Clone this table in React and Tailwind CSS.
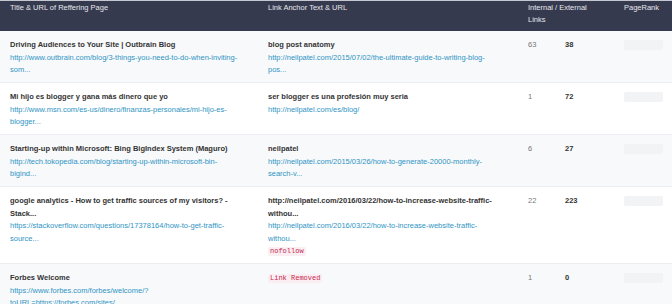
import React from "react";

const rows = [
  {
    title: ["Driving Audiences to Your Site | Outbrain Blog"],
    url: ["http://www.outbrain.com/blog/3-things-you-need-to-do-when-inviting-", "som..."],
    anchor: ["blog post anatomy"],
    anchorUrl: ["http://neilpatel.com/2015/07/02/the-ultimate-guide-to-writing-blog-", "pos..."],
    internal: "63",
    external: "38",
    bg: "bg-[#f8f9fb]",
  },
  {
    title: ["Mi hijo es blogger y gana más dinero que yo"],
    url: ["http://www.msn.com/es-us/dinero/finanzas-personales/mi-hijo-es-", "blogger..."],
    anchor: ["ser blogger es una profesión muy seria"],
    anchorUrl: ["http://neilpatel.com/es/blog/"],
    internal: "1",
    external: "72",
    bg: "bg-white",
  },
  {
    title: ["Starting-up within Microsoft: Bing BigIndex System (Maguro)"],
    url: ["http://tech.tokopedia.com/blog/starting-up-within-microsoft-bin-", "bigind..."],
    anchor: ["neilpatel"],
    anchorUrl: ["http://neilpatel.com/2015/03/26/how-to-generate-20000-monthly-", "search-v..."],
    internal: "6",
    external: "27",
    bg: "bg-[#f8f9fb]",
  },
  {
    title: ["google analytics - How to get traffic sources of my visitors? -", "Stack..."],
    url: ["https://stackoverflow.com/questions/17378164/how-to-get-traffic-", "source..."],
    anchor: ["http://neilpatel.com/2016/03/22/how-to-increase-website-traffic-", "withou..."],
    anchorUrl: ["http://neilpatel.com/2016/03/22/how-to-increase-website-traffic-", "withou..."],
    badge: "nofollow",
    internal: "22",
    external: "223",
    bg: "bg-white",
  },
  {
    title: ["Forbes Welcome"],
    url: ["https://www.forbes.com/forbes/welcome/?", "toURL=https://forbes.com/sites/..."],
    removed: true,
    internal: "1",
    external: "0",
    bg: "bg-[#f8f9fb]",
  },
];

function Lines({ lines, className }) {
  return (
    <div className={className}>
      {lines.map((l, i) => (
        <div key={i} className="whitespace-nowrap">
          {l}
        </div>
      ))}
    </div>
  );
}

function Badge({ children }) {
  return (
    <span className="inline-block rounded-[2px] bg-[#fbeef2] px-[2px] font-['Liberation_Mono',monospace] text-[7px] leading-[9px] text-[#c7254e]">
      {children}
    </span>
  );
}

export default function App() {
  return (
    <div className="w-[672px] h-[304px] overflow-hidden bg-white font-['Liberation_Sans',Arial,sans-serif] text-[7.5px] leading-[12.5px]">
      <div className="grid grid-cols-[258px_260px_96px_58px] h-[31px] bg-[#363a4f] border-t border-[#c5c8d0] text-[#e6e7ec] leading-[11.5px]">
        <div className="pl-[10px] pt-[1px]">Title &amp; URL of Reffering Page</div>
        <div className="pl-[10px] pt-[1px]">Link Anchor Text &amp; URL</div>
        <div className="pl-[10px] pt-[1px]">
          Internal / External
          <br />
          Links
        </div>
        <div className="pl-[10px] pt-[1px]">PageRank</div>
      </div>
      {rows.map((r, i) => (
        <div
          key={i}
          className={`grid grid-cols-[258px_260px_96px_58px] border-b border-[#eceef1] pt-[8px] pb-[5.5px] ${r.bg}`}
        >
          <div className="pl-[10px]">
            <Lines lines={r.title} className="font-bold text-[#333333]" />
            <Lines lines={r.url} className="text-[#2f95c4]" />
          </div>
          <div className="pl-[10px]">
            {r.removed ? (
              <div>
                <Badge>Link Removed</Badge>
              </div>
            ) : (
              <>
                <Lines lines={r.anchor} className="font-bold text-[#333333]" />
                <Lines lines={r.anchorUrl} className="text-[#2f95c4]" />
                {r.badge && (
                  <div>
                    <Badge>{r.badge}</Badge>
                  </div>
                )}
              </>
            )}
          </div>
          <div className="pl-[10px] flex">
            <div className="w-[37px] text-[#777777]">{r.internal}</div>
            <div className="font-bold text-[#333333]">{r.external}</div>
          </div>
          <div className="pl-[10px] pt-[1px]">
            <div className="h-[10px] w-[39px] rounded-[2px] bg-[#f2f3f5]" />
          </div>
        </div>
      ))}
    </div>
  );
}
